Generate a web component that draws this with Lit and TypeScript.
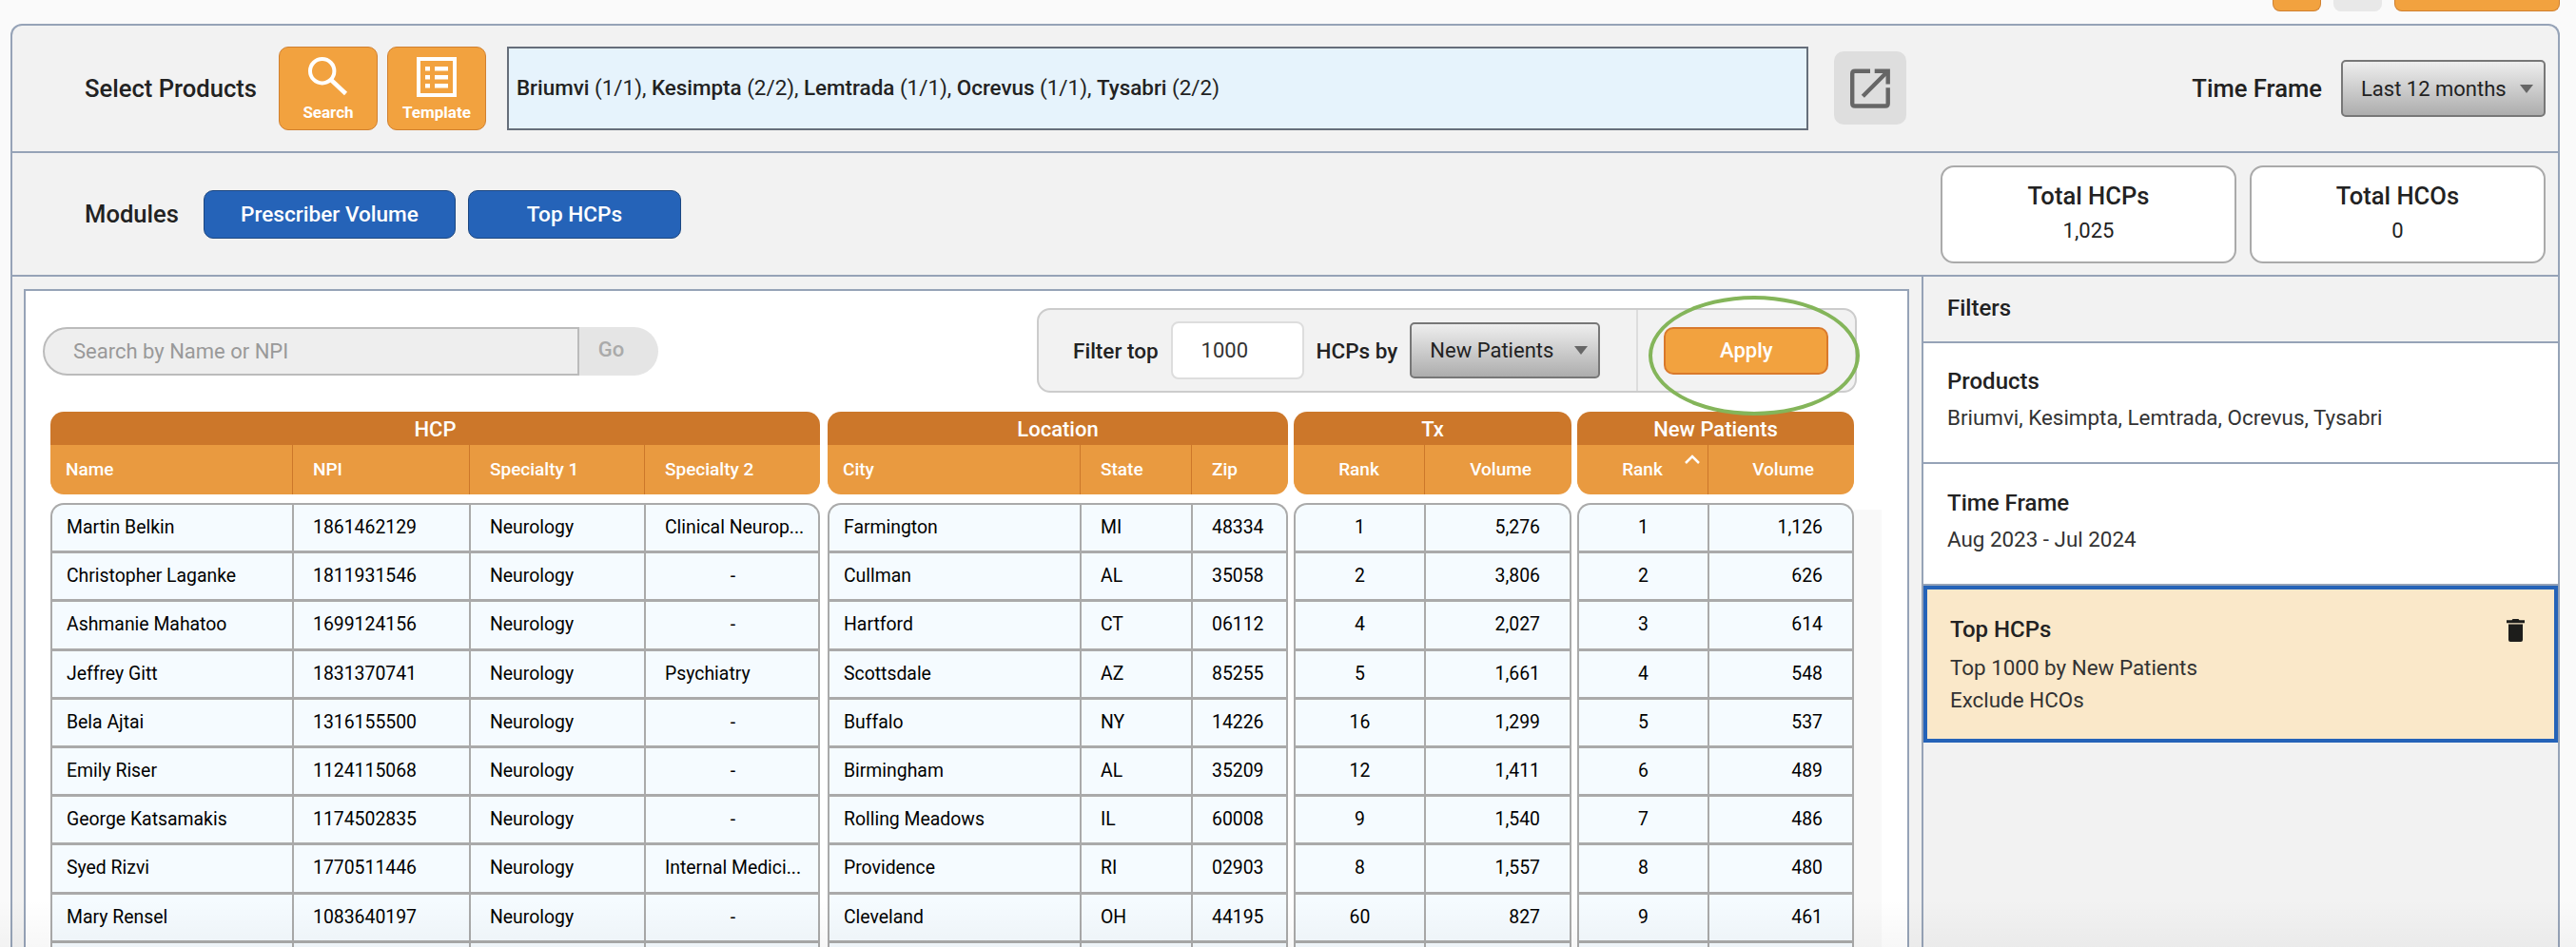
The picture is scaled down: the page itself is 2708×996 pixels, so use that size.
import { LitElement, html, css, svg } from "lit";
import { customElement } from "lit/decorators.js";

type Col = { label: string; width: number; align?: string };
type Group = { title: string; cols: Col[]; sorted?: number };

const groups: Group[] = [
  {
    title: "HCP",
    cols: [
      { label: "Name", width: 254 },
      { label: "NPI", width: 186 },
      { label: "Specialty 1", width: 184 },
      { label: "Specialty 2", width: 185 },
    ],
  },
  {
    title: "Location",
    cols: [
      { label: "City", width: 265 },
      { label: "State", width: 117 },
      { label: "Zip", width: 102 },
    ],
  },
  {
    title: "Tx",
    cols: [
      { label: "Rank", width: 137, align: "center" },
      { label: "Volume", width: 155, align: "right" },
    ],
  },
  {
    title: "New Patients",
    sorted: 0,
    cols: [
      { label: "Rank", width: 137, align: "center" },
      { label: "Volume", width: 154, align: "right" },
    ],
  },
];

const rows = [
  [["Martin Belkin", "1861462129", "Neurology", "Clinical Neurop..."], ["Farmington", "MI", "48334"], ["1", "5,276"], ["1", "1,126"]],
  [["Christopher Laganke", "1811931546", "Neurology", "-"], ["Cullman", "AL", "35058"], ["2", "3,806"], ["2", "626"]],
  [["Ashmanie Mahatoo", "1699124156", "Neurology", "-"], ["Hartford", "CT", "06112"], ["4", "2,027"], ["3", "614"]],
  [["Jeffrey Gitt", "1831370741", "Neurology", "Psychiatry"], ["Scottsdale", "AZ", "85255"], ["5", "1,661"], ["4", "548"]],
  [["Bela Ajtai", "1316155500", "Neurology", "-"], ["Buffalo", "NY", "14226"], ["16", "1,299"], ["5", "537"]],
  [["Emily Riser", "1124115068", "Neurology", "-"], ["Birmingham", "AL", "35209"], ["12", "1,411"], ["6", "489"]],
  [["George Katsamakis", "1174502835", "Neurology", "-"], ["Rolling Meadows", "IL", "60008"], ["9", "1,540"], ["7", "486"]],
  [["Syed Rizvi", "1770511446", "Neurology", "Internal Medici..."], ["Providence", "RI", "02903"], ["8", "1,557"], ["8", "480"]],
  [["Mary Rensel", "1083640197", "Neurology", "-"], ["Cleveland", "OH", "44195"], ["60", "827"], ["9", "461"]],
  [["", "", "", ""], ["", "", ""], ["", ""], ["", ""]],
];

const products = [
  ["Briumvi", "(1/1)"],
  ["Kesimpta", "(2/2)"],
  ["Lemtrada", "(1/1)"],
  ["Ocrevus", "(1/1)"],
  ["Tysabri", "(2/2)"],
];

const searchIcon = svg`<circle cx="14.7" cy="14.7" r="12.7" fill="none" stroke="#fff" stroke-width="4"/><path d="M24 24 L39.5 38.5" stroke="#fff" stroke-width="4.5" fill="none"/>`;
const templateIcon = svg`<rect x="2" y="2" width="38" height="38" fill="none" stroke="#fff" stroke-width="4"/><path d="M9 10h5v4.5H9zM9 19h5v4.5H9zM9 28h5v4.5H9zM19 10h14v4.5H19zM19 19h14v4.5H19zM19 28h14v4.5H19z" fill="#fff"/>`;

@customElement("app-root")
export class AppRoot extends LitElement {
  static styles = css`
    :host {
      display: block;
      height: 996px;
      overflow: hidden;
      background: #fafafa;
      font-family: Roboto, "Liberation Sans", sans-serif;
      color: #222;
      position: relative;
    }
    .topbar {
      height: 25px;
      display: flex;
      justify-content: flex-end;
      gap: 13px;
      padding-right: 17px;
      box-sizing: border-box;
    }
    .topbar div {
      height: 12px;
      width: 51px;
      box-sizing: border-box;
      background: #f2a23f;
      border: 1px solid #d08030;
      border-top: none;
      border-radius: 0 0 8px 8px;
    }
    .topbar .grey {
      background: #e8e8e8;
      border-color: #e8e8e8;
    }
    .topbar .wide {
      width: 174px;
    }
    .panel {
      margin: 0 17px 0 11px;
      height: 971px;
      box-sizing: border-box;
      background: #f2f2f2;
      border: 2px solid #96a3b7;
      border-bottom: none;
      border-radius: 12px 12px 0 0;
      display: flex;
      flex-direction: column;
    }
    .label {
      font-size: 25.6px;
      font-weight: 500;
      color: #222;
      white-space: nowrap;
    }
    .row1 {
      height: 134px;
      box-sizing: border-box;
      border-bottom: 2px solid #96a3b7;
      display: flex;
      align-items: flex-start;
      padding: 22px 13px 0 76px;
    }
    .row1 .label {
      line-height: 88px;
    }
    .tool {
      width: 104px;
      height: 88px;
      box-sizing: border-box;
      background: #f2a23f;
      border: 1px solid #d08030;
      border-radius: 10px;
      color: #fff;
      font-size: 17px;
      font-weight: 700;
      display: flex;
      flex-direction: column;
      align-items: center;
      padding-top: 10px;
    }
    .tool svg {
      display: block;
      width: 42px;
      height: 42px;
    }
    .tool span {
      margin-top: 6px;
      line-height: 20px;
    }
    .search-tool {
      margin-left: 23px;
    }
    .template-tool {
      margin-left: 10px;
    }
    .products {
      margin-left: 22px;
      width: 1368px;
      height: 88px;
      box-sizing: border-box;
      background: #e6f3fc;
      border: 2px solid #666e7a;
      padding: 26px 8px 0 8px;
      font-size: 22.4px;
      line-height: 30px;
      color: #222;
      white-space: nowrap;
    }
    .products b {
      font-weight: 500;
    }
    .share {
      margin: 5px 0 0 27px;
      width: 76px;
      height: 77px;
      border-radius: 10px;
      background: #dedede;
      display: flex;
      align-items: center;
      justify-content: center;
    }
    .share svg {
      width: 44px;
      height: 44px;
      display: block;
    }
    .row1 .time-label {
      margin-left: auto;
    }
    .dropdown {
      box-sizing: border-box;
      border: 2px solid #777;
      border-radius: 5px;
      background: linear-gradient(#eeeeee, #adadad);
      font-size: 22px;
      color: #222;
      display: flex;
      align-items: center;
      justify-content: space-between;
      white-space: nowrap;
    }
    .dropdown i {
      width: 0;
      height: 0;
      border-left: 7px solid transparent;
      border-right: 7px solid transparent;
      border-top: 9px solid #666;
    }
    .time-drop {
      margin: 14px 0 0 20px;
      width: 215px;
      height: 60px;
      padding: 0 11px 0 19px;
    }
    .row2 {
      height: 130px;
      box-sizing: border-box;
      border-bottom: 2px solid #96a3b7;
      display: flex;
      align-items: center;
      padding: 0 13px 0 76px;
    }
    .module {
      height: 51px;
      box-sizing: border-box;
      background: #2563b8;
      border: 1px solid #1d4780;
      border-radius: 10px;
      color: #fff;
      font-size: 22.6px;
      font-weight: 500;
      display: flex;
      align-items: center;
      justify-content: center;
    }
    .m1 {
      width: 265px;
      margin-left: 26px;
    }
    .m2 {
      width: 224px;
      margin-left: 13px;
    }
    .totals {
      margin-left: auto;
      display: flex;
      gap: 14px;
    }
    .total {
      width: 311px;
      height: 103px;
      box-sizing: border-box;
      background: #fff;
      border: 2px solid #aaa;
      border-radius: 14px;
      text-align: center;
      padding-top: 15px;
    }
    .total h3 {
      margin: 0;
      font-size: 25.6px;
      font-weight: 500;
      line-height: 30px;
    }
    .total p {
      margin: 9px 0 0;
      font-size: 22px;
      line-height: 26px;
    }
    .body {
      flex: 1;
      display: flex;
      min-height: 0;
    }
    .left {
      width: 2009px;
      flex: none;
      box-sizing: border-box;
      padding: 13px 13px 0 12px;
      border-right: 2px solid #96a3b7;
    }
    .sheet {
      height: 100%;
      box-sizing: border-box;
      background: #fff;
      border: 2px solid #96a3b7;
      border-bottom: none;
      padding: 18px 0 0 18px;
      position: relative;
    }
    .tools {
      display: flex;
      justify-content: space-between;
      align-items: flex-start;
      padding-right: 53px;
      height: 109px;
    }
    .find {
      margin-top: 20px;
      width: 647px;
      height: 51px;
      display: flex;
      box-sizing: border-box;
      font-size: 22px;
    }
    .find .input {
      width: 564px;
      box-sizing: border-box;
      background: #eee;
      border: 2px solid #bbb;
      border-radius: 26px 0 0 26px;
      color: #999;
      padding-left: 30px;
      line-height: 47px;
    }
    .find .go {
      flex: 1;
      background: #e5e5e5;
      border-radius: 0 26px 26px 0;
      color: #aaa;
      font-weight: 500;
      line-height: 47px;
      text-align: center;
      padding-right: 16px;
      box-sizing: border-box;
    }
    .filter {
      position: relative;
      width: 862px;
      height: 89px;
      box-sizing: border-box;
      background: #f2f2f2;
      border: 2px solid #ccc;
      border-radius: 14px;
      display: flex;
      align-items: center;
      padding-left: 36px;
    }
    .filter .label {
      font-size: 22.5px;
    }
    .num {
      margin: 0 13px;
      width: 140px;
      height: 61px;
      box-sizing: border-box;
      background: #fff;
      border: 2px solid #ddd;
      border-radius: 8px;
      font-size: 22px;
      line-height: 57px;
      padding-left: 30px;
      color: #333;
    }
    .patients-drop {
      margin-left: 13px;
      width: 200px;
      height: 59px;
      padding: 0 11px 0 19px;
    }
    .apply-wrap {
      margin-left: 38px;
      align-self: stretch;
      border-left: 2px solid #ddd;
      display: flex;
      align-items: center;
      padding-left: 27px;
    }
    .apply {
      width: 173px;
      height: 50px;
      box-sizing: border-box;
      background: #f2a23f;
      border: 2px solid #d9792c;
      border-radius: 10px;
      color: #fff;
      font-size: 22px;
      font-weight: 500;
      text-align: center;
      line-height: 46px;
    }
    .ring {
      position: absolute;
      left: 641px;
      top: -15px;
      width: 222px;
      height: 126px;
      box-sizing: border-box;
      border: 4.5px solid #84b55a;
      border-radius: 50%;
      pointer-events: none;
    }
    .grid {
      display: flex;
      margin-left: 8px;
    }
    .group {
      margin-right: 6px;
      flex: none;
    }
    .group:first-child {
      margin-right: 8px;
    }
    .gtitle {
      height: 35px;
      background: #cc772a;
      border-radius: 14px 14px 0 0;
      color: #fff;
      font-size: 22px;
      font-weight: 500;
      line-height: 37px;
      text-align: center;
    }
    .heads {
      height: 52px;
      display: grid;
      background: #e99a40;
      border-radius: 0 0 14px 14px;
      overflow: hidden;
    }
    .head {
      position: relative;
      box-sizing: border-box;
      color: #fff;
      font-size: 19px;
      font-weight: 500;
      line-height: 52px;
      padding-left: 21px;
      border-left: 1px solid #cc772a;
    }
    .head:first-child {
      border-left: none;
      padding-left: 16px;
    }
    .head.center,
    .head.center:first-child {
      text-align: center;
      padding-left: 0;
    }
    .head.right {
      text-align: right;
      padding-right: 42px;
    }
    .caret {
      position: absolute;
      right: 8px;
      top: 10px;
      width: 16px;
      height: 10px;
    }
    .rows {
      margin-top: 9px;
      border: 2px solid #aaa;
      border-bottom: none;
      border-radius: 14px 14px 0 0;
      overflow: hidden;
      background: #f5fbff;
    }
    .tr {
      display: grid;
      height: 51.2px;
      box-sizing: border-box;
      border-bottom: 3px solid #aaa;
    }
    .td {
      box-sizing: border-box;
      border-left: 2px solid #aaa;
      font-size: 19.4px;
      color: #000;
      line-height: 48px;
      padding-left: 20px;
      white-space: nowrap;
      overflow: hidden;
    }
    .td:first-child {
      border-left: none;
      padding-left: 15px;
    }
    .td.center,
    .td.center:first-child {
      text-align: center;
      padding-left: 0;
    }
    .td.right {
      text-align: right;
      padding-right: 33px;
    }
    .td.dash {
      text-align: center;
      padding-left: 0;
    }
    .rail {
      position: absolute;
      left: 1922px;
      top: 230px;
      bottom: 0;
      width: 29px;
      background: #f9f9f9;
    }
    .side {
      flex: 1;
      display: flex;
      flex-direction: column;
    }
    .side h2 {
      margin: 0;
      height: 70px;
      box-sizing: border-box;
      border-bottom: 2px solid #96a3b7;
      font-size: 24px;
      font-weight: 500;
      line-height: 66px;
      padding-left: 25px;
    }
    .card {
      background: #fff;
      border-bottom: 2px solid #96a3b7;
      box-sizing: border-box;
      padding: 25px 25px 0;
      height: 127px;
    }
    .card h3,
    .active h3 {
      margin: 0;
      font-size: 24px;
      font-weight: 500;
      line-height: 30px;
    }
    .card p,
    .active p {
      margin: 8px 0 0;
      font-size: 22.4px;
      line-height: 30px;
      color: #333;
    }
    .card.second {
      height: 128px;
      padding-top: 26px;
    }
    .active {
      position: relative;
      height: 165px;
      box-sizing: border-box;
      background: #fae8c9;
      border: 4px solid #2563b8;
      padding: 27px 24px 0;
    }
    .active p {
      margin-top: 10px;
    }
    .active p + p {
      margin-top: 4px;
    }
    .trash {
      position: absolute;
      right: 31px;
      top: 31px;
      width: 19px;
      height: 24px;
    }
    .fade {
      position: absolute;
      left: 0;
      right: 0;
      bottom: 0;
      height: 50px;
      background: linear-gradient(rgba(0, 0, 0, 0), rgba(0, 0, 0, 0.03));
      pointer-events: none;
    }
  `;

  renderGroup(g: Group, gi: number) {
    const tpl = g.cols.map((c) => `${c.width}px`).join(" ");
    // body sits inside a 2px frame, so its first column gives those 2px back
    const bodyTpl = g.cols.map((c, i) => (i === 0 ? `${c.width - 2}px` : `${c.width}px`)).join(" ");
    const total = g.cols.reduce((sum, c) => sum + c.width, 0);
    return html`
      <div class="group" style="width:${total}px">
        <div class="gtitle">${g.title}</div>
        <div class="heads" style="grid-template-columns:${tpl}">
          ${g.cols.map(
            (c, i) => html`
              <div class="head ${c.align ?? ""}">
                ${c.label}
                ${g.sorted === i
                  ? html`<svg class="caret" viewBox="0 0 16 10">
                      <path d="M1 9 L8 2 L15 9" fill="none" stroke="#fff" stroke-width="2.5" />
                    </svg>`
                  : ""}
              </div>
            `
          )}
        </div>
        <div class="rows">
          ${rows.map(
            (r) => html`
              <div class="tr" style="grid-template-columns:${bodyTpl}">
                ${r[gi].map(
                  (v, i) =>
                    html`<div class="td ${g.cols[i].align ?? ""} ${v === "-" ? "dash" : ""}">${v}</div>`
                )}
              </div>
            `
          )}
        </div>
      </div>
    `;
  }

  render() {
    return html`
      <div class="topbar">
        <div></div>
        <div class="grey"></div>
        <div class="wide"></div>
      </div>
      <div class="panel">
        <div class="row1">
          <div class="label">Select Products</div>
          <div class="tool search-tool">
            <svg viewBox="0 0 42 42">${searchIcon}</svg>
            <span>Search</span>
          </div>
          <div class="tool template-tool">
            <svg viewBox="0 0 42 42">${templateIcon}</svg>
            <span>Template</span>
          </div>
          <div class="products">
            ${products.map(
              (p, i) => html`<b>${p[0]}</b> ${p[1]}${i < products.length - 1 ? ", " : ""}`
            )}
          </div>
          <div class="share">
            <svg viewBox="0 0 44 44">
              <path
                d="M22 3.7H6Q3.2 3.7 3.2 6.5V37.7Q3.2 40.5 6 40.5H38Q40.7 40.5 40.7 37.7V21.2"
                fill="none"
                stroke="#666"
                stroke-width="4.4"
              />
              <path d="M26.7 3.7H40.7V17.5" fill="none" stroke="#666" stroke-width="4.4" />
              <path d="M41 3.5L14.3 30.2" fill="none" stroke="#666" stroke-width="4.4" />
            </svg>
          </div>
          <div class="label time-label">Time Frame</div>
          <div class="dropdown time-drop"><span>Last 12 months</span><i></i></div>
        </div>
        <div class="row2">
          <div class="label">Modules</div>
          <div class="module m1">Prescriber Volume</div>
          <div class="module m2">Top HCPs</div>
          <div class="totals">
            <div class="total"><h3>Total HCPs</h3><p>1,025</p></div>
            <div class="total"><h3>Total HCOs</h3><p>0</p></div>
          </div>
        </div>
        <div class="body">
          <div class="left">
            <div class="sheet">
              <div class="rail"></div>
              <div class="tools">
                <div class="find">
                  <div class="input">Search by Name or NPI</div>
                  <div class="go">Go</div>
                </div>
                <div class="filter">
                  <span class="label">Filter top</span>
                  <div class="num">1000</div>
                  <span class="label">HCPs by</span>
                  <div class="dropdown patients-drop"><span>New Patients</span><i></i></div>
                  <div class="apply-wrap"><div class="apply">Apply</div></div>
                  <div class="ring"></div>
                </div>
              </div>
              <div class="grid">${groups.map((g, i) => this.renderGroup(g, i))}</div>
            </div>
          </div>
          <div class="side">
            <h2>Filters</h2>
            <div class="card">
              <h3>Products</h3>
              <p>Briumvi, Kesimpta, Lemtrada, Ocrevus, Tysabri</p>
            </div>
            <div class="card second">
              <h3>Time Frame</h3>
              <p>Aug 2023 - Jul 2024</p>
            </div>
            <div class="active">
              <h3>Top HCPs</h3>
              <p>Top 1000 by New Patients</p>
              <p>Exclude HCOs</p>
              <svg class="trash" viewBox="0 0 19 24">
                <path
                  d="M6.5 0h6l1 1.2H19v3H0v-3h5.5zM2 5.5h15V22a2 2 0 0 1-2 2H4a2 2 0 0 1-2-2z"
                  fill="#1d1d1b"
                />
              </svg>
            </div>
          </div>
        </div>
      </div>
      <div class="fade"></div>
    `;
  }
}
